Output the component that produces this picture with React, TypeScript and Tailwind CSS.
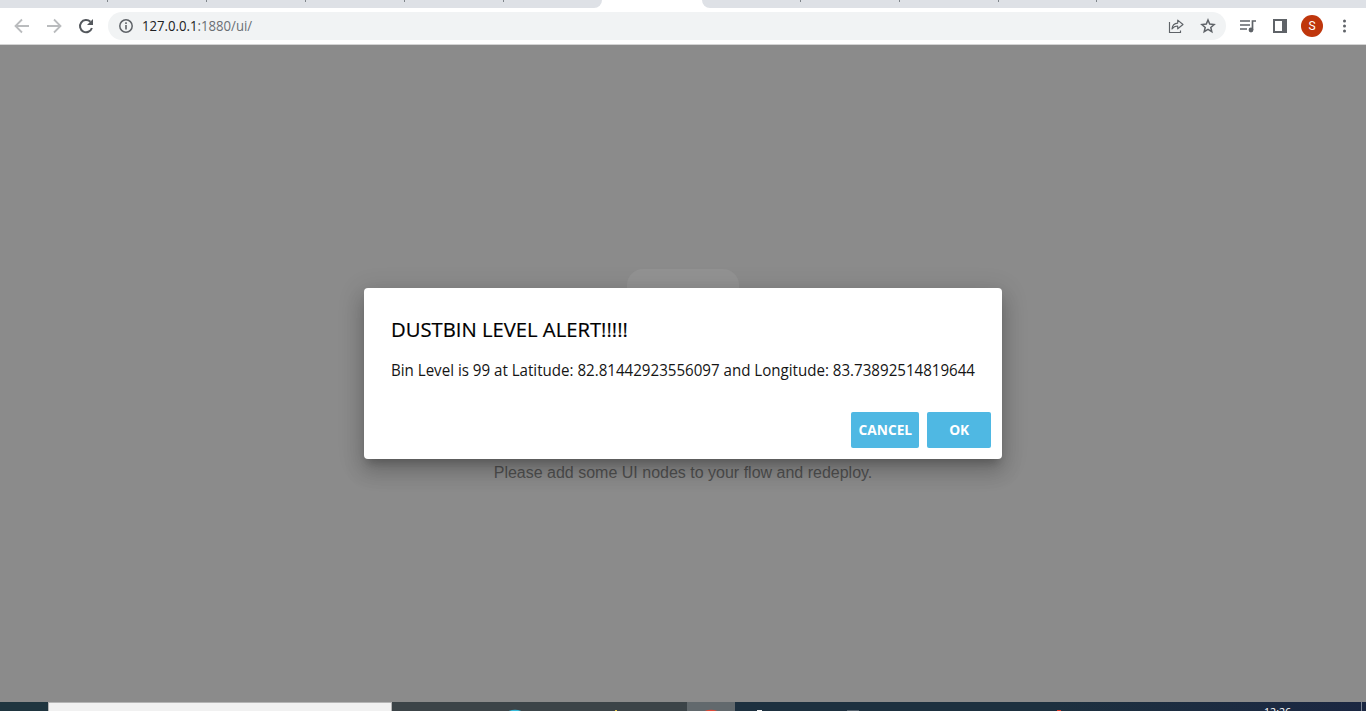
import React from 'react';

const leftTabs = [108, 99, 99, 99, 99];
const rightTabs = [99, 99, 99, 98];

function Tabs() {
  return (
    <div className="flex h-2 bg-white">
      <div className="flex w-[602px] rounded-br-lg bg-[#dee1e6]">
        {leftTabs.map((w, i) => (
          <div key={i} className="flex justify-end" style={{ width: w }}>
            <div className="h-0.5 w-px bg-[#80868b]" />
          </div>
        ))}
      </div>
      <div className="w-[100px]" />
      <div className="flex flex-1 rounded-bl-lg bg-[#dee1e6]">
        {rightTabs.map((w, i) => (
          <div key={i} className="flex justify-end" style={{ width: w }}>
            <div className="h-0.5 w-px bg-[#80868b]" />
          </div>
        ))}
      </div>
    </div>
  );
}

function Toolbar() {
  return (
    <div className="flex h-[37px] items-center border-b border-[#d4d4d4] bg-white">
      <svg className="ml-[14px]" width="16" height="16" viewBox="0 0 16 16" fill="none" stroke="#babcbe" strokeWidth="1.8">
        <path d="M15 8H2M8 1.5L1.5 8L8 14.5" />
      </svg>
      <svg className="ml-4" width="16" height="16" viewBox="0 0 16 16" fill="none" stroke="#babcbe" strokeWidth="1.8">
        <path d="M1 8H14M8 1.5L14.5 8L8 14.5" />
      </svg>
      <svg className="ml-4" width="16" height="16" viewBox="0 0 16 16" fill="none">
        <path d="M13.9 10A6.1 6.1 0 1 1 12.4 3.8" stroke="#54585d" strokeWidth="2" />
        <path d="M15 1V7H9Z" fill="#54585d" />
      </svg>
      <div className="ml-[14px] flex h-7 w-[1118px] items-center rounded-full bg-[#f1f3f4]">
        <svg className="ml-[11px]" width="14" height="14" viewBox="0 0 14 14" fill="none" stroke="#5f6368">
          <circle cx="7" cy="7" r="6.2" strokeWidth="1.5" />
          <path d="M7 6V10.5M7 3.3V4.9" strokeWidth="1.6" />
        </svg>
        <div className="ml-[9px] flex-1 whitespace-nowrap font-['Open_Sans','Noto_Sans',sans-serif] text-[14px] leading-5 text-[#202124]">
          <span className="inline-block origin-left scale-x-[0.94]">127.0.0.1<span className="text-[#6b6f74]">:1880/ui/</span></span>
        </div>
        <svg width="16" height="16" viewBox="0 0 16 16" fill="none" stroke="#5f6368" strokeWidth="1.15">
          <path d="M1.5 4V14.5H12.5V12.5" />
          <path d="M4 11C4.3 7.4 6 5.2 9.7 5.1V2.1L15 6.5L9.7 10.8V8C7.3 8 5.5 8.8 4 11Z" strokeLinejoin="round" />
        </svg>
        <svg className="ml-4 mr-[10px]" width="16" height="16" viewBox="0 0 16 16" fill="none" stroke="#5f6368" strokeWidth="1.5">
          <path d="M8 2L9.7 6.1L14.1 6.5L10.8 9.4L11.8 13.7L8 11.4L4.2 13.7L5.2 9.4L1.9 6.5L6.3 6.1Z" />
        </svg>
      </div>
      <svg className="ml-[14px]" width="16" height="16" viewBox="0 0 16 16" fill="none" stroke="#5f6368" strokeWidth="1.7">
        <path d="M0 3H10M0 7H10M0 11H7M12.5 12V3H16" />
        <circle cx="11" cy="12" r="2.4" fill="#5f6368" stroke="none" />
      </svg>
      <svg className="ml-[17px]" width="14" height="14" viewBox="0 0 14 14">
        <path d="M1 1H13V13H1Z" fill="none" stroke="#5f6368" strokeWidth="2" />
        <path d="M9 0H14V14H9Z" fill="#5f6368" />
      </svg>
      <div className="ml-[14px] flex size-[22px] items-center justify-center rounded-full bg-[#bf360c] font-[Roboto,sans-serif] text-[12px] text-white">S</div>
      <svg className="ml-[19px]" width="4" height="14" viewBox="0 0 4 14" fill="#5f6368">
        <circle cx="2.5" cy="2" r="1.5" /><circle cx="2.5" cy="7" r="1.5" /><circle cx="2.5" cy="12" r="1.5" />
      </svg>
    </div>
  );
}

function Dialog() {
  return (
    <div className="flex h-[171px] w-[638px] flex-col rounded bg-white font-['Open_Sans','Noto_Sans',sans-serif] text-black shadow-[0_7px_8px_-4px_rgba(0,0,0,0.2),0_13px_19px_2px_rgba(0,0,0,0.14),0_5px_24px_4px_rgba(0,0,0,0.12)]">
      <h2 className="ml-[27px] mt-[28px] h-7 whitespace-nowrap text-[20px] font-medium leading-7 [-webkit-text-stroke:0.2px_black]">
        <span className="inline-block origin-left scale-x-[1.012]">DUSTBIN LEVEL ALERT!!!!!</span>
      </h2>
      <p className="ml-[27px] mt-[14px] h-6 whitespace-nowrap text-[16px] leading-6 text-[#151515]">
        <span className="inline-block origin-left scale-x-[0.944]">Bin Level is 99 at Latitude: 82.81442923556097 and Longitude: 83.73892514819644</span>
      </p>
      <div className="mr-[11px] mt-[30px] flex justify-end gap-2 text-[14px] font-bold text-white">
        <button className="flex h-9 w-[68px] items-center justify-center rounded-[2px] bg-[#4fb8e3] pb-0.5"><span className="inline-block scale-x-[0.98]">CANCEL</span></button>
        <button className="flex h-9 w-16 items-center justify-center rounded-[2px] bg-[#4fb8e3] pb-0.5"><span className="inline-block scale-x-[0.98]">OK</span></button>
      </div>
    </div>
  );
}

function Taskbar() {
  return (
    <div className="flex h-[9px] overflow-hidden bg-[#1b2b43]">
      <div className="w-12 bg-[#1f353f]" />
      <div className="w-[344px] border border-b-0 border-[#b5b5b5] bg-[#f1f1f1]" />
      <div className="w-[295px] bg-[#3c4448]">
        <svg width="295" height="9" viewBox="0 0 295 9">
          <ellipse cx="123" cy="11" rx="8" ry="3.3" fill="#36bcdb" />
          <path d="M223 8H225V9H223Z" fill="#e5c84b" />
        </svg>
      </div>
      <div className="w-12 bg-[#62696d]">
        <svg width="48" height="9" viewBox="0 0 48 9"><ellipse cx="24" cy="11" rx="8" ry="3.3" fill="#df4836" /></svg>
      </div>
      <div className="flex flex-1 bg-linear-to-r from-[#1d303f] via-[#1d303f] to-[#1b2742]">
        <svg width="529" height="9" viewBox="0 0 529 9">
          <path d="M22 8H27V9H22Z" fill="#eef0f2" />
          <path d="M112 8H124V9H112Z" fill="#56636f" />
          <path d="M322 8H326V9H322Z" fill="#db3b2c" />
        </svg>
        <div className="mt-[3px] h-[6px] flex-1 overflow-hidden whitespace-nowrap font-['Open_Sans','Noto_Sans',sans-serif] text-[11px] leading-[13px] text-white">
          <span className="inline-block origin-left scale-x-[0.97]">12:26</span>
        </div>
        <div className="mr-1 w-px bg-[#7c8594]" />
      </div>
    </div>
  );
}

export default function App() {
  return (
    <div className="flex h-[711px] w-[1366px] flex-col overflow-hidden">
      <Tabs />
      <Toolbar />
      <main className="relative flex h-[657px] flex-col items-center bg-[#8b8b8b]">
        <div className="mt-[224px] size-28 rounded-[16px] bg-[#929292]" />
        <p className="mt-[81px] font-['Liberation_Sans',sans-serif] text-[16px] leading-[22px] text-[#505050]">Please add some UI nodes to your flow and redeploy.</p>
        <div className="absolute inset-0 flex items-center justify-center">
          <Dialog />
        </div>
      </main>
      <Taskbar />
    </div>
  );
}
